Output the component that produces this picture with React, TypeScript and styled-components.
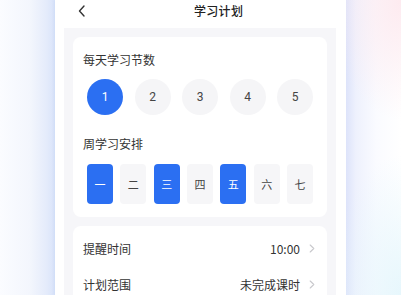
import React, { useState } from "react";
import styled, { createGlobalStyle, css } from "styled-components";

const Global = createGlobalStyle`
  html, body { margin: 0; padding: 0; }
  body {
    width: 401px;
    height: 295px;
    overflow: hidden;
    font-family: "Noto Sans CJK SC", "Noto Sans", sans-serif;
    background: #ffffff;
  }
`;

const Stage = styled.div`
  display: flex;
  width: 401px;
  height: 295px;
`;

const Side = styled.div<{ $side: "left" | "right" }>`
  flex: 1;
  ${(p) =>
    p.$side === "left"
      ? css`
          background: linear-gradient(90deg, #fbfcff 0%, #f3f6fd 55%, #e4ebfb 85%, #d8e3fa 100%);
        `
      : css`
          background:
            radial-gradient(ellipse 70px 120px at 100% 0%, rgba(253, 232, 238, 0.9), rgba(253, 232, 238, 0) 100%),
            radial-gradient(ellipse 70px 140px at 100% 100%, rgba(228, 246, 252, 0.9), rgba(228, 246, 252, 0) 100%),
            linear-gradient(90deg, #dde3fa 0%, #eef1fd 18%, #fafbff 55%, #ffffff 100%);
        `}
`;

const Phone = styled.div`
  width: 291px;
  height: 295px;
  background: #ffffff;
  display: flex;
  flex-direction: column;
  overflow: hidden;
  box-shadow: 0 0 3px rgba(190, 205, 240, 0.6);
`;

const Header = styled.div`
  flex-shrink: 0;
  height: 28px;
  display: flex;
  align-items: center;
  padding-left: 22px;
  box-sizing: border-box;
  padding-bottom: 7px;
`;

const Back = styled.svg`
  width: 10px;
  height: 12px;
`;

const Title = styled.div`
  margin-left: 107px;
  font-size: 12px;
  font-weight: 500;
  color: #222;
  letter-spacing: 0.3px;
`;

const Content = styled.div`
  flex: 1 0 auto;
  margin: 0 10px 0 9px;
  background: #f6f6f9;
  padding: 9px 9px 0 9px;
  display: flex;
  flex-direction: column;
  gap: 9px;
`;

const Card = styled.div<{ $pad: string }>`
  flex-shrink: 0;
  background: #ffffff;
  border-radius: 8px;
  padding: ${(p) => p.$pad};
  display: flex;
  flex-direction: column;
`;

const Label = styled.div<{ $mt?: number }>`
  font-size: 12px;
  line-height: 17px;
  color: #333;
  margin-top: ${(p) => p.$mt ?? 0}px;
`;

const OptionRow = styled.div<{ $mt: number }>`
  display: flex;
  justify-content: space-between;
  padding: 0 4px;
  margin-top: ${(p) => p.$mt}px;
`;

const Circle = styled.div<{ $on: boolean }>`
  width: 36px;
  height: 36px;
  border-radius: 50%;
  display: flex;
  align-items: center;
  justify-content: center;
  font-size: 12px;
  font-weight: 400;
  font-family: "Roboto", "Noto Sans", sans-serif;
  background: ${(p) => (p.$on ? "#2b6ff2" : "#f5f5f7")};
  color: ${(p) => (p.$on ? "#fff" : "#444")};
`;

const Day = styled.div<{ $on: boolean }>`
  width: 26px;
  height: 40px;
  border-radius: 4px;
  display: flex;
  align-items: center;
  justify-content: center;
  font-size: 11px;
  background: ${(p) => (p.$on ? "#2b6ff2" : "#f6f6f8")};
  color: ${(p) => (p.$on ? "#fff" : "#444")};
`;

const Row = styled.div`
  height: 36px;
  display: flex;
  align-items: center;
  font-size: 12px;
  color: #333;
`;

const RowLabel = styled.div`
  flex: 1;
`;

const RowValue = styled.div`
  font-size: 12px;
  color: #333;
  margin-right: 9px;
`;

const Chevron = styled.svg`
  width: 6px;
  height: 9px;
`;

const days = ["一", "二", "三", "四", "五", "六", "七"];

export default function App() {
  const [count, setCount] = useState(1);
  const [sel, setSel] = useState<boolean[]>([true, false, true, false, true, false, false]);

  return (
    <>
      <Global />
      <Stage>
        <Side $side="left" />
        <Phone>
          <Header>
            <Back viewBox="0 0 10 12">
              <path d="M7 1 L2.5 6 L7 11" fill="none" stroke="#333" strokeWidth="1.4" strokeLinecap="round" strokeLinejoin="round" />
            </Back>
            <Title>学习计划</Title>
          </Header>
          <Content>
            <Card $pad="14px 10px 13px 10px">
              <Label>每天学习节数</Label>
              <OptionRow $mt={11}>
                {[1, 2, 3, 4, 5].map((n) => (
                  <Circle key={n} $on={n === count} onClick={() => setCount(n)}>
                    {n}
                  </Circle>
                ))}
              </OptionRow>
              <Label $mt={20}>周学习安排</Label>
              <OptionRow $mt={12}>
                {days.map((d, i) => (
                  <Day
                    key={d}
                    $on={sel[i]}
                    onClick={() => setSel(sel.map((v, j) => (j === i ? !v : v)))}
                  >
                    {d}
                  </Day>
                ))}
              </OptionRow>
            </Card>
            <Card $pad="4px 12px 0 10px">
              <Row>
                <RowLabel>提醒时间</RowLabel>
                <RowValue>10:00</RowValue>
                <Chevron viewBox="0 0 6 9">
                  <path d="M1.2 1 L4.8 4.5 L1.2 8" fill="none" stroke="#c8c8cc" strokeWidth="1.1" strokeLinecap="round" strokeLinejoin="round" />
                </Chevron>
              </Row>
              <Row>
                <RowLabel>计划范围</RowLabel>
                <RowValue>未完成课时</RowValue>
                <Chevron viewBox="0 0 6 9">
                  <path d="M1.2 1 L4.8 4.5 L1.2 8" fill="none" stroke="#c8c8cc" strokeWidth="1.1" strokeLinecap="round" strokeLinejoin="round" />
                </Chevron>
              </Row>
            </Card>
          </Content>
        </Phone>
        <Side $side="right" />
      </Stage>
    </>
  );
}
